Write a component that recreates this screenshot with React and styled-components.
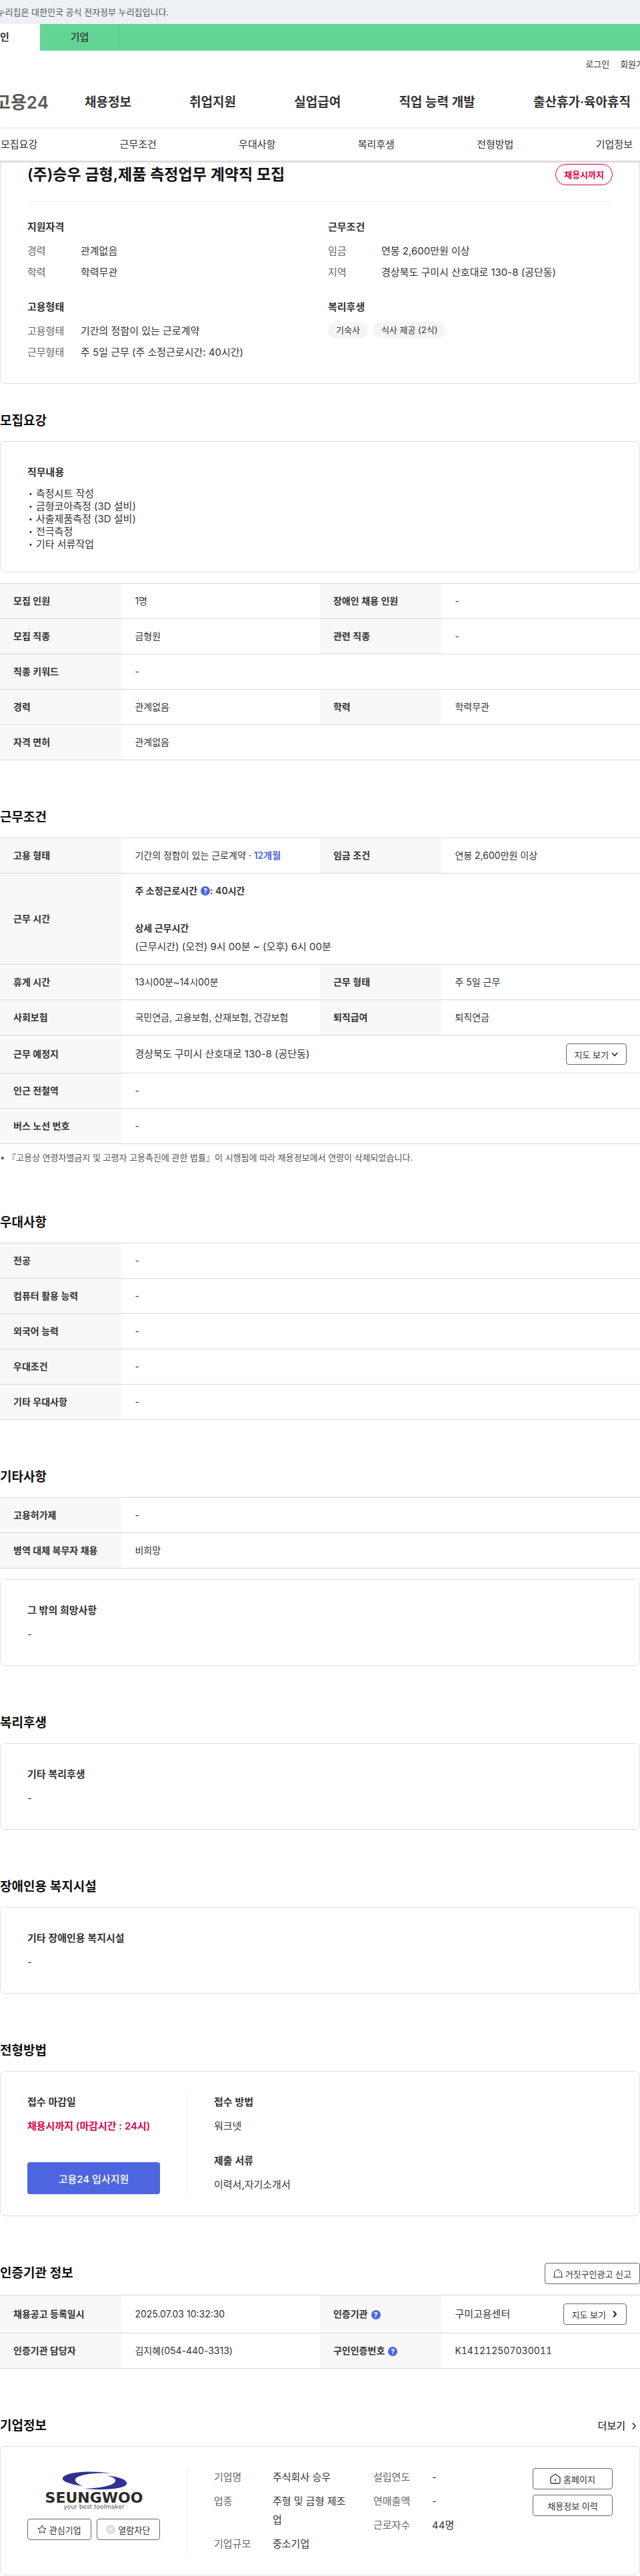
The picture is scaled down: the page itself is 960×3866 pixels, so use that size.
import React from 'react';
import styled, { createGlobalStyle, css } from 'styled-components';

const Global = createGlobalStyle`
  *, *::before, *::after { box-sizing: border-box; }
  body {
    margin: 0;
    background: #fff;
    color: #333;
    font-family: Inter, "Noto Sans CJK KR", sans-serif;
    font-size: 15px;
    line-height: 28px;
    word-break: keep-all;
    overflow-x: hidden;
  }
  h1, h2, h3, p, ul, dl, dd { margin: 0; padding: 0; font-size: inherit; font-weight: inherit; }
  ul { list-style: none; }
  a { color: inherit; text-decoration: none; }
  button { font-family: inherit; }
`;

const Page = styled.div`overflow-x: hidden;`;

const Notice = styled.div`
  background: #edf1f5;
  overflow: hidden;
  p {
    margin-left: -20px;
    font-size: 13px;
    line-height: 36px;
    color: #555;
    white-space: nowrap;
  }
`;

const Audience = styled.nav`
  display: flex;
  background: #62d594;
  overflow: hidden;
  margin-left: -60px;
`;
const AudienceTab = styled.a`
  flex: 0 0 120px;
  height: 40px;
  line-height: 40px;
  text-align: center;
  background: ${(p) => (p.$on ? '#fff' : 'transparent')};
  font-weight: ${(p) => (p.$on ? 700 : 500)};
  border-right: ${(p) => (p.$on ? 0 : '1px solid #52c886')};
`;

const Utility = styled.div`
  display: flex;
  justify-content: flex-end;
  gap: 16px;
  height: 40px;
  margin-right: -18px;
  font-size: 13px;
  line-height: 40px;
`;

const Header = styled.header`
  display: flex;
  align-items: center;
  height: 76px;
`;
const Brand = styled.a`
  margin-left: -8px;
  margin-right: 54px;
  font-size: 26px;
  font-weight: 600;
  color: #5a5a5a;
  white-space: nowrap;
`;
const MainNav = styled.nav`
  display: flex;
  flex: 1;
  justify-content: space-between;
  padding-right: 14px;
  font-size: 19px;
  font-weight: 600;
  white-space: nowrap;
`;

const PageTabs = styled.nav`
  display: flex;
  justify-content: space-between;
  position: relative;
  z-index: 1;
  height: 50px;
  padding: 0 11px 0 1px;
  line-height: 48px;
  background: #fff;
  border-top: 1px solid #eee;
  border-bottom: 1px solid #ddd;
  box-shadow: 0 1px 3px rgba(0, 0, 0, 0.25);
`;

const Card = styled.div`
  padding: 32px 40px;
  border: 1px solid #ddd;
  border-radius: 8px;
  ${(p) => p.$spaced && css`margin-top: 16px;`}
`;
const Summary = styled(Card)`
  border-top: 0;
  border-radius: 0 0 8px 8px;
  padding: 4px 40px 32px;
`;
const SummaryHead = styled.div`
  display: flex;
  justify-content: space-between;
  align-items: center;
  padding-bottom: 24px;
  border-bottom: 1px solid #eee;
  h1 {
    color: #111;
    font-size: 23px;
    font-weight: 600;
    line-height: 32px;
  }
`;
const Deadline = styled.span`
  padding: 0 12px;
  border: 1px solid #e0004d;
  border-radius: 16px;
  color: #e0004d;
  font-size: 13px;
  font-weight: 600;
  line-height: 30px;
`;
const SummaryGrid = styled.div`
  display: grid;
  grid-template-columns: 1fr 1fr;
  gap: 24px;
  padding: 24px 0 0;
`;
const GroupTitle = styled.h3`
  font-weight: 600;
  margin-bottom: 8px;
`;
const Pair = styled.dl`
  display: flex;
  margin-bottom: ${(p) => p.$gap || 4}px;
  &:last-child { margin-bottom: 0; }
  dt { flex: 0 0 ${(p) => p.$label || 80}px; color: #666; }
  dd { flex: 1; word-break: break-all; }
`;
const Tags = styled.ul`
  display: flex;
  gap: 8px;
  li {
    padding: 0 12px;
    border-radius: 12px;
    background: #f4f4f4;
    font-size: 13px;
    line-height: 24px;
  }
`;

const Section = styled.section`
  margin-top: ${(p) => p.$top || 70}px;
`;
const SectionHead = styled.div`
  display: flex;
  justify-content: space-between;
  align-items: center;
  margin-bottom: ${(p) => p.$bottom || 14}px;
  h2 {
    color: #111;
    font-size: 19px;
    font-weight: 600;
    line-height: 32px;
  }
`;
const Duties = styled.ul`
  line-height: 19px;
  li { display: flex; }
  li::before {
    content: "•";
    flex: 0 0 13px;
    padding-left: 2px;
    font-size: 10px;
  }
`;

const DataTable = styled.table`
  width: 100%;
  border-collapse: collapse;
  table-layout: fixed;
  border-top: 1px solid #d8d8d8;
  font-size: 14px;
  line-height: 28px;
  margin-top: ${(p) => p.$top || 0}px;
  tr { border-bottom: 1px solid #d8d8d8; }
  th, td { padding: 12px 20px; text-align: left; }
  th { background: #f8f8f8; font-weight: 600; }
`;
const ActionCell = styled.td`
  > div {
    display: flex;
    align-items: center;
    justify-content: space-between;
  }
`;
const CodeCell = styled.td`font-variant-numeric: tabular-nums;`;
const Large = styled.p`font-size: 15px;`;
const Hours = styled.strong`
  display: flex;
  align-items: center;
  font-weight: 600;
  margin-bottom: 28px;
`;
const Strong = styled.strong`font-weight: 600;`;
const Accent = styled.strong`color: #4d66e0; font-weight: 600;`;
const HelpButton = styled.button`
  width: 14px;
  height: 14px;
  margin-left: 5px;
  padding: 0;
  border: 0;
  border-radius: 50%;
  background: #4d66e0;
  color: #fff;
  font-size: 10px;
  font-weight: 700;
  line-height: 14px;
`;
const Footnote = styled.p`
  margin-top: 8px;
  font-size: 13px;
  line-height: 24px;
  color: #555;
`;

const OutlineButton = styled.button`
  display: inline-flex;
  align-items: center;
  justify-content: center;
  gap: ${(p) => p.$gap || 4}px;
  height: 32px;
  padding: 0 12px;
  border: 1px solid #666;
  border-radius: 4px;
  background: #fff;
  color: #333;
  font-size: 13px;
  white-space: nowrap;
`;
const MoreLink = styled.a`
  display: flex;
  align-items: center;
  gap: 8px;
  padding-right: 4px;
  font-weight: 500;
`;

const Split = styled.div`
  display: grid;
  grid-template-columns: 240px 1fr;
  align-items: stretch;
`;
const SideColumn = styled.div`
  display: flex;
  flex-direction: column;
  justify-content: space-between;
  padding-right: 40px;
  border-right: 1px solid #eee;
`;
const BodyColumn = styled.div`padding-left: 40px;`;
const Method = styled.div`
  & + & { margin-top: 24px; }
`;
const Urgent = styled.p`color: #e0004d; font-weight: 600;`;
const ApplyButton = styled.button`
  height: 48px;
  border: 0;
  border-radius: 4px;
  background: #4d66e0;
  color: #fff;
  font-size: 15px;
  font-weight: 500;
`;

const CompanyBody = styled(BodyColumn)`
  display: grid;
  grid-template-columns: 199px 1fr 120px;
  column-gap: 40px;
`;
const ButtonRow = styled.div`
  display: grid;
  grid-template-columns: 1fr 1fr;
  gap: 8px;
  margin-bottom: 20px;
  button { padding: 0; }
`;
const ButtonStack = styled.div`
  display: flex;
  flex-direction: column;
  gap: 8px;
`;
const CompanyLogo = styled.svg`
  display: block;
  width: 170px;
  height: 60px;
  margin: 4px auto 0;
`;

const Help = ({ label }) => <HelpButton type="button" aria-label={label}>?</HelpButton>;

const Chevron = ({ dir, weight = 1.5 }) => (
  <svg width="10" height="10" viewBox="0 0 10 10" fill="none" stroke="#222" strokeWidth={weight}>
    <path d={dir === 'down' ? 'M1 3l4 4.500 4-4.500' : 'M3 .5L7 5 3 9.500'} />
  </svg>
);

const Cols = () => (
  <colgroup>
    <col style={{ width: '19%' }} />
    <col style={{ width: '31%' }} />
    <col style={{ width: '19%' }} />
    <col style={{ width: '31%' }} />
  </colgroup>
);

const Row = ({ cells }) => (
  <tr>
    {cells.map(([name, value]) => (
      <React.Fragment key={name}>
        <th scope="row">{name}</th>
        <td colSpan={cells.length === 1 ? 3 : 1}>{value}</td>
      </React.Fragment>
    ))}
  </tr>
);

const Rows = ({ rows }) => rows.map((cells) => <Row key={cells[0][0]} cells={cells} />);

const NoteCard = ({ title, spaced }) => (
  <Card $spaced={spaced}>
    <GroupTitle>{title}</GroupTitle>
    <p>-</p>
  </Card>
);

export default function App() {
  return (
    <Page>
      <Global />
      <Notice><p>이 누리집은 대한민국 공식 전자정부 누리집입니다.</p></Notice>
      <Audience>
        <AudienceTab href="#personal" $on>개인</AudienceTab>
        <AudienceTab href="#company">기업</AudienceTab>
      </Audience>
      <Utility>
        <a href="#login">로그인</a>
        <a href="#join">회원가입</a>
      </Utility>
      <Header>
        <Brand href="#home">고용24</Brand>
        <MainNav>
          {['채용정보', '취업지원', '실업급여', '직업 능력 개발', '출산휴가·육아휴직'].map((t) => (
            <a key={t} href={`#${t}`}>{t}</a>
          ))}
        </MainNav>
      </Header>
      <PageTabs>
        {['모집요강', '근무조건', '우대사항', '복리후생', '전형방법', '기업정보'].map((t) => (
          <a key={t} href={`#${t}`}>{t}</a>
        ))}
      </PageTabs>

      <main>
        <Summary>
          <SummaryHead>
            <h1>(주)승우 금형,제품 측정업무 계약직 모집</h1>
            <Deadline>채용시까지</Deadline>
          </SummaryHead>
          <SummaryGrid>
            <section>
              <GroupTitle>지원자격</GroupTitle>
              <Pair><dt>경력</dt><dd>관계없음</dd></Pair>
              <Pair><dt>학력</dt><dd>학력무관</dd></Pair>
            </section>
            <section>
              <GroupTitle>근무조건</GroupTitle>
              <Pair><dt>임금</dt><dd>연봉 2,600만원 이상</dd></Pair>
              <Pair><dt>지역</dt><dd>경상북도 구미시 산호대로 130-8 (공단동)</dd></Pair>
            </section>
            <section>
              <GroupTitle>고용형태</GroupTitle>
              <Pair><dt>고용형태</dt><dd>기간의 정함이 있는 근로계약</dd></Pair>
              <Pair><dt>근무형태</dt><dd>주 5일 근무 (주 소정근로시간: 40시간)</dd></Pair>
            </section>
            <section>
              <GroupTitle>복리후생</GroupTitle>
              <Tags><li>기숙사</li><li>식사 제공 (2식)</li></Tags>
            </section>
          </SummaryGrid>
        </Summary>

        <Section id="모집요강" $top={40}>
          <SectionHead><h2>모집요강</h2></SectionHead>
          <Card>
            <GroupTitle>직무내용</GroupTitle>
            <Duties>
              {['측정시트 작성', '금형코아측정 (3D 설비)', '사출제품측정 (3D 설비)', '전극측정', '기타 서류작업'].map((t) => (
                <li key={t}>{t}</li>
              ))}
            </Duties>
          </Card>
          <DataTable $top={16}>
            <Cols />
            <tbody>
              <Rows rows={[
                [['모집 인원', '1명'], ['장애인 채용 인원', '-']],
                [['모집 직종', '금형원'], ['관련 직종', '-']],
                [['직종 키워드', '-']],
                [['경력', '관계없음'], ['학력', '학력무관']],
                [['자격 면허', '관계없음']],
              ]} />
            </tbody>
          </DataTable>
        </Section>

        <Section id="근무조건">
          <SectionHead><h2>근무조건</h2></SectionHead>
          <DataTable>
            <Cols />
            <tbody>
              <Row cells={[
                ['고용 형태', <>기간의 정함이 있는 근로계약 <Accent>· 12개월</Accent></>],
                ['임금 조건', '연봉 2,600만원 이상'],
              ]} />
              <Row cells={[['근무 시간', (
                <>
                  <Hours>주 소정근로시간 <Help label="소정근로시간 도움말" />: 40시간</Hours>
                  <Strong>상세 근무시간</Strong>
                  <Large>(근무시간) (오전) 9시 00분 ~ (오후) 6시 00분</Large>
                </>
              )]]} />
              <Row cells={[['휴게 시간', '13시00분~14시00분'], ['근무 형태', '주 5일 근무']]} />
              <Row cells={[['사회보험', '국민연금, 고용보험, 산재보험, 건강보험'], ['퇴직급여', '퇴직연금']]} />
              <tr>
                <th scope="row">근무 예정지</th>
                <ActionCell colSpan={3}>
                  <div>
                    <Large>경상북도 구미시 산호대로 130-8 (공단동)</Large>
                    <OutlineButton type="button">지도 보기 <Chevron dir="down" /></OutlineButton>
                  </div>
                </ActionCell>
              </tr>
              <Rows rows={[[['인근 전철역', '-']], [['버스 노선 번호', '-']]]} />
            </tbody>
          </DataTable>
          <Footnote>• 『고용상 연령차별금지 및 고령자 고용촉진에 관한 법률』이 시행됨에 따라 채용정보에서 연령이 삭제되었습니다.</Footnote>
        </Section>

        <Section id="우대사항">
          <SectionHead><h2>우대사항</h2></SectionHead>
          <DataTable>
            <Cols />
            <tbody>
              <Rows rows={[
                [['전공', '-']],
                [['컴퓨터 활용 능력', '-']],
                [['외국어 능력', '-']],
                [['우대조건', '-']],
                [['기타 우대사항', '-']],
              ]} />
            </tbody>
          </DataTable>
        </Section>

        <Section>
          <SectionHead><h2>기타사항</h2></SectionHead>
          <DataTable>
            <Cols />
            <tbody>
              <Rows rows={[[['고용허가제', '-']], [['병역 대체 복무자 채용', '비희망']]]} />
            </tbody>
          </DataTable>
          <NoteCard spaced title="그 밖의 희망사항" />
        </Section>

        <Section id="복리후생">
          <SectionHead><h2>복리후생</h2></SectionHead>
          <NoteCard title="기타 복리후생" />
        </Section>

        <Section>
          <SectionHead><h2>장애인용 복지시설</h2></SectionHead>
          <NoteCard title="기타 장애인용 복지시설" />
        </Section>

        <Section id="전형방법">
          <SectionHead><h2>전형방법</h2></SectionHead>
          <Card>
            <Split>
              <SideColumn>
                <div>
                  <GroupTitle>접수 마감일</GroupTitle>
                  <Urgent>채용시까지 (마감시간 : 24시)</Urgent>
                </div>
                <ApplyButton type="button">고용24 입사지원</ApplyButton>
              </SideColumn>
              <BodyColumn>
                <Method><GroupTitle>접수 방법</GroupTitle><p>워크넷</p></Method>
                <Method><GroupTitle>제출 서류</GroupTitle><p>이력서,자기소개서</p></Method>
              </BodyColumn>
            </Split>
          </Card>
        </Section>

        <Section>
          <SectionHead $bottom={16}>
            <h2>인증기관 정보</h2>
            <OutlineButton type="button">
              <svg width="14" height="14" viewBox="0 0 14 14" fill="none" stroke="#333">
                <path d="M1.500 12V7a5.500 5.500 0 0 1 11 0v5M0 12.500h14M8 4.500a2 2 0 0 1 1.500 1.500" />
              </svg>
              거짓구인광고 신고
            </OutlineButton>
          </SectionHead>
          <DataTable>
            <Cols />
            <tbody>
              <tr>
                <th scope="row">채용공고 등록일시</th>
                <td>2025.07.03 10:32:30</td>
                <th scope="row">인증기관<Help label="인증기관 도움말" /></th>
                <ActionCell>
                  <div>
                    <Large>구미고용센터</Large>
                    <OutlineButton type="button" $gap={8}>지도 보기 <Chevron weight={2} /></OutlineButton>
                  </div>
                </ActionCell>
              </tr>
              <tr>
                <th scope="row">인증기관 담당자</th>
                <td>김지혜(054-440-3313)</td>
                <th scope="row">구인인증번호<Help label="구인인증번호 도움말" /></th>
                <CodeCell>K141212507030011</CodeCell>
              </tr>
            </tbody>
          </DataTable>
        </Section>

        <Section id="기업정보">
          <SectionHead>
            <h2>기업정보</h2>
            <MoreLink href="#more">더보기 <Chevron /></MoreLink>
          </SectionHead>
          <Card>
            <Split>
              <SideColumn>
                <CompanyLogo viewBox="0 0 170 60" role="img" aria-label="SEUNGWOO">
                  <path fill="#2e3192" d="M111 4C88 0 60 1 47 5 35 9 35 14 46 18c6 2 13 4 22 5-8-3-12-7-11-10 2-7 30-11 54-9Z" />
                  <path fill="#2e3192" d="M103 7c20 2 33 7 31 13-3 7-32 10-64 7 24-1 43-4 47-11 2-4-5-7-14-9Z" />
                  <text x="85" y="48" textAnchor="middle" fontFamily="DejaVu Sans, sans-serif" fontWeight="700" fontSize="22" fill="#2b2a29">SEUNGWOO</text>
                  <text x="85" y="57" textAnchor="middle" fontFamily="DejaVu Sans, sans-serif" fontSize="9" fill="#555">your best toolmaker</text>
                </CompanyLogo>
                <ButtonRow>
                  <OutlineButton type="button">
                    <svg width="14" height="14" viewBox="0 0 14 14" fill="none" stroke="#333">
                      <path d="M7 1l1.800 4.100 4.400.4-3.300 2.900 1 4.400L7 10.500l-3.900 2.300 1-4.400L.8 5.500l4.400-.4Z" />
                    </svg>
                    관심기업
                  </OutlineButton>
                  <OutlineButton type="button">
                    <svg width="14" height="14" viewBox="0 0 14 14">
                      <circle cx="7" cy="7" r="7" fill="#ddd" />
                      <path d="M4.500 4.500l5 5m0-5l-5 5" stroke="#fff" strokeWidth="1.200" />
                    </svg>
                    열람차단
                  </OutlineButton>
                </ButtonRow>
              </SideColumn>
              <CompanyBody>
                <div>
                  <Pair $label={88} $gap={8}><dt>기업명</dt><dd>주식회사 승우</dd></Pair>
                  <Pair $label={88} $gap={8}><dt>업종</dt><dd>주형 및 금형 제조업</dd></Pair>
                  <Pair $label={88} $gap={8}><dt>기업규모</dt><dd>중소기업</dd></Pair>
                </div>
                <div>
                  <Pair $label={88} $gap={8}><dt>설립연도</dt><dd>-</dd></Pair>
                  <Pair $label={88} $gap={8}><dt>연매출액</dt><dd>-</dd></Pair>
                  <Pair $label={88} $gap={8}><dt>근로자수</dt><dd>44명</dd></Pair>
                </div>
                <ButtonStack>
                  <OutlineButton type="button">
                    <svg width="16" height="16" viewBox="0 0 16 16" fill="none" stroke="#333" strokeWidth="1.300">
                      <path d="M1 6l7-5 7 5v7.500a1.500 1.500 0 0 1-1.500 1.500h-11A1.500 1.500 0 0 1 1 13.500ZM8 8v4" />
                    </svg>
                    홈페이지
                  </OutlineButton>
                  <OutlineButton type="button">채용정보 이력</OutlineButton>
                </ButtonStack>
              </CompanyBody>
            </Split>
          </Card>
        </Section>
      </main>
    </Page>
  );
}
